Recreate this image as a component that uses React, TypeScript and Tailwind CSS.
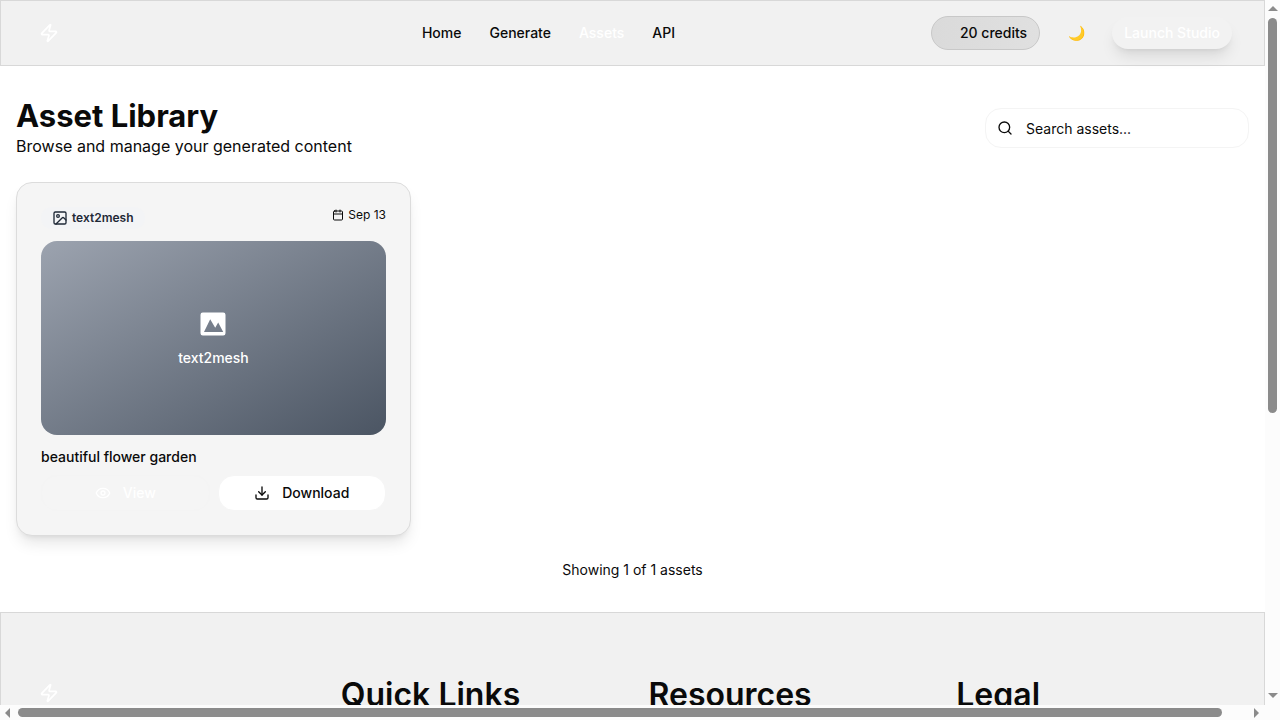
import { Calendar, Download, Eye, Image as ImageIcon, Search, Zap } from "lucide-react";

const navLinks = [
  { label: "Home", active: false },
  { label: "Generate", active: false },
  { label: "Assets", active: true },
  { label: "API", active: false },
];

const footerColumns = ["Quick Links", "Resources", "Legal"];

function Logo() {
  return (
    <a href="#" aria-label="Home page" className="flex h-8 w-[133px] items-center">
      <span className="flex size-8 items-center justify-center">
        <Zap className="size-5 text-white" />
      </span>
    </a>
  );
}

function Header() {
  return (
    <header className="flex shrink-0 items-center justify-between border border-[#d8d8d8] bg-[#f1f1f1] px-8 py-[15px]">
      <Logo />
      <nav className="flex items-center gap-7 text-sm font-medium">
        {navLinks.map((link) => (
          <a key={link.label} href="#" className={link.active ? "text-white" : "text-[#0a0a0a]"}>
            {link.label}
          </a>
        ))}
      </nav>
      <div className="flex items-center gap-4">
        <span className="rounded-full border border-[#c8c8c8] bg-linear-to-r from-[#dadada] to-[#e0e0e0] py-1.5 pr-3 pl-7 text-sm font-medium">
          20 credits
        </span>
        <button type="button" aria-label="Toggle theme" className="flex h-8 w-10 items-center justify-center text-sm">
          🌙
        </button>
        <button type="button" className="h-8 rounded-2xl bg-[#f2f2f2] px-3 text-sm font-medium text-white shadow-lg">
          Launch Studio
        </button>
      </div>
    </header>
  );
}

function AssetPreview() {
  return (
    <div className="flex aspect-video flex-col items-center justify-center gap-2 rounded-2xl bg-linear-[to_bottom_right,#9ca3af,#4b5563] text-white">
      <svg viewBox="0 0 32 32" className="size-8" fill="currentColor" aria-hidden="true">
        <path
          fillRule="evenodd"
          d="M4.8 4.5h20.4a2.3 2.3 0 0 1 2.3 2.3v18.4a2.3 2.3 0 0 1-2.3 2.3H4.8a2.3 2.3 0 0 1-2.3-2.3V6.800a2.300 2.300 0 0 1 2.300-2.300ZM6 24h19.200l-5-9.400-3 5.200-5-8.600Z"
        />
      </svg>
      <span className="text-sm font-medium">text2mesh</span>
    </div>
  );
}

function AssetCard() {
  return (
    <article className="rounded-2xl border border-[#dcdcdc] bg-[#f5f5f5] p-6 shadow-lg">
      <div className="mb-3 flex items-start justify-between text-xs">
        <span className="flex items-center gap-1 rounded-full bg-[#f3f4f6] px-[11px] py-[3px] font-semibold text-[#1f2937]">
          <ImageIcon className="size-4" />
          text2mesh
        </span>
        <span className="flex items-center gap-1">
          <Calendar className="size-3" />
          Sep 13
        </span>
      </div>
      <AssetPreview />
      <h2 className="mt-3 text-sm font-medium">beautiful flower garden</h2>
      <div className="mt-2 grid grid-cols-2 gap-2 text-sm font-medium">
        <button type="button" className="flex h-9 items-center justify-center gap-3 rounded-2xl border border-[#f4f4f4] text-white">
          <Eye className="size-4" />
          View
        </button>
        <button type="button" className="flex h-9 items-center justify-center gap-3 rounded-2xl border border-[#f5f5f5] bg-white">
          <Download className="size-4" />
          Download
        </button>
      </div>
    </article>
  );
}

function Main() {
  return (
    <main className="flex shrink-0 flex-col gap-6 px-4 py-8">
      <div className="flex items-center justify-between">
        <div>
          <h1 className="text-[31px] leading-9 font-bold">Asset Library</h1>
          <p>Browse and manage your generated content</p>
        </div>
        <label className="relative">
          <Search className="absolute top-3 left-3 size-4" />
          <input
            type="search"
            aria-label="Search assets"
            placeholder="Search assets..."
            className="h-10 w-[264px] rounded-2xl border border-[#f4f4f4] bg-white pr-3 pl-10 text-sm placeholder:text-[#0a0a0a]"
          />
        </label>
      </div>
      <div className="grid grid-cols-3 gap-6">
        <AssetCard />
      </div>
      <p className="text-center text-sm">Showing 1 of 1 assets</p>
    </main>
  );
}

function Footer() {
  return (
    <footer className="grid shrink-0 grid-cols-4 gap-8 border border-[#d8d8d8] bg-[#f1f1f1] px-8 py-16">
      <Logo />
      {footerColumns.map((title) => (
        <h2 key={title} className="text-[32px] leading-9 font-semibold">
          {title}
        </h2>
      ))}
    </footer>
  );
}

function Arrow({ points }: { points: string }) {
  return (
    <svg viewBox="0 0 16 16" className="size-4 shrink-0" fill="#8b8b8b" aria-hidden="true">
      <polygon points={points} />
    </svg>
  );
}

export default function App() {
  return (
    <div className="grid h-screen grid-cols-[minmax(0,1fr)_15px] grid-rows-[minmax(0,1fr)_15px] overflow-hidden bg-[#fcfcfc] font-[Inter,sans-serif] text-[#0a0a0a]">
      <div className="flex flex-col overflow-hidden bg-white">
        <Header />
        <Main />
        <Footer />
      </div>
      <div className="flex flex-col items-center">
        <Arrow points="3,11 8,6 13,11" />
        <div className="min-h-0 flex-1 py-0.5">
          <div className="h-[59%] w-[9px] rounded-full bg-[#8b8b8b]" />
        </div>
        <Arrow points="3,4 13,4 8,9" />
      </div>
      <div className="flex items-center">
        <Arrow points="10,3 10,13 5,8" />
        <div className="min-w-0 flex-1 px-0.5">
          <div className="h-[9px] w-[98%] rounded-full bg-[#8b8b8b]" />
        </div>
        <Arrow points="5,3 5,13 10,8" />
      </div>
    </div>
  );
}
